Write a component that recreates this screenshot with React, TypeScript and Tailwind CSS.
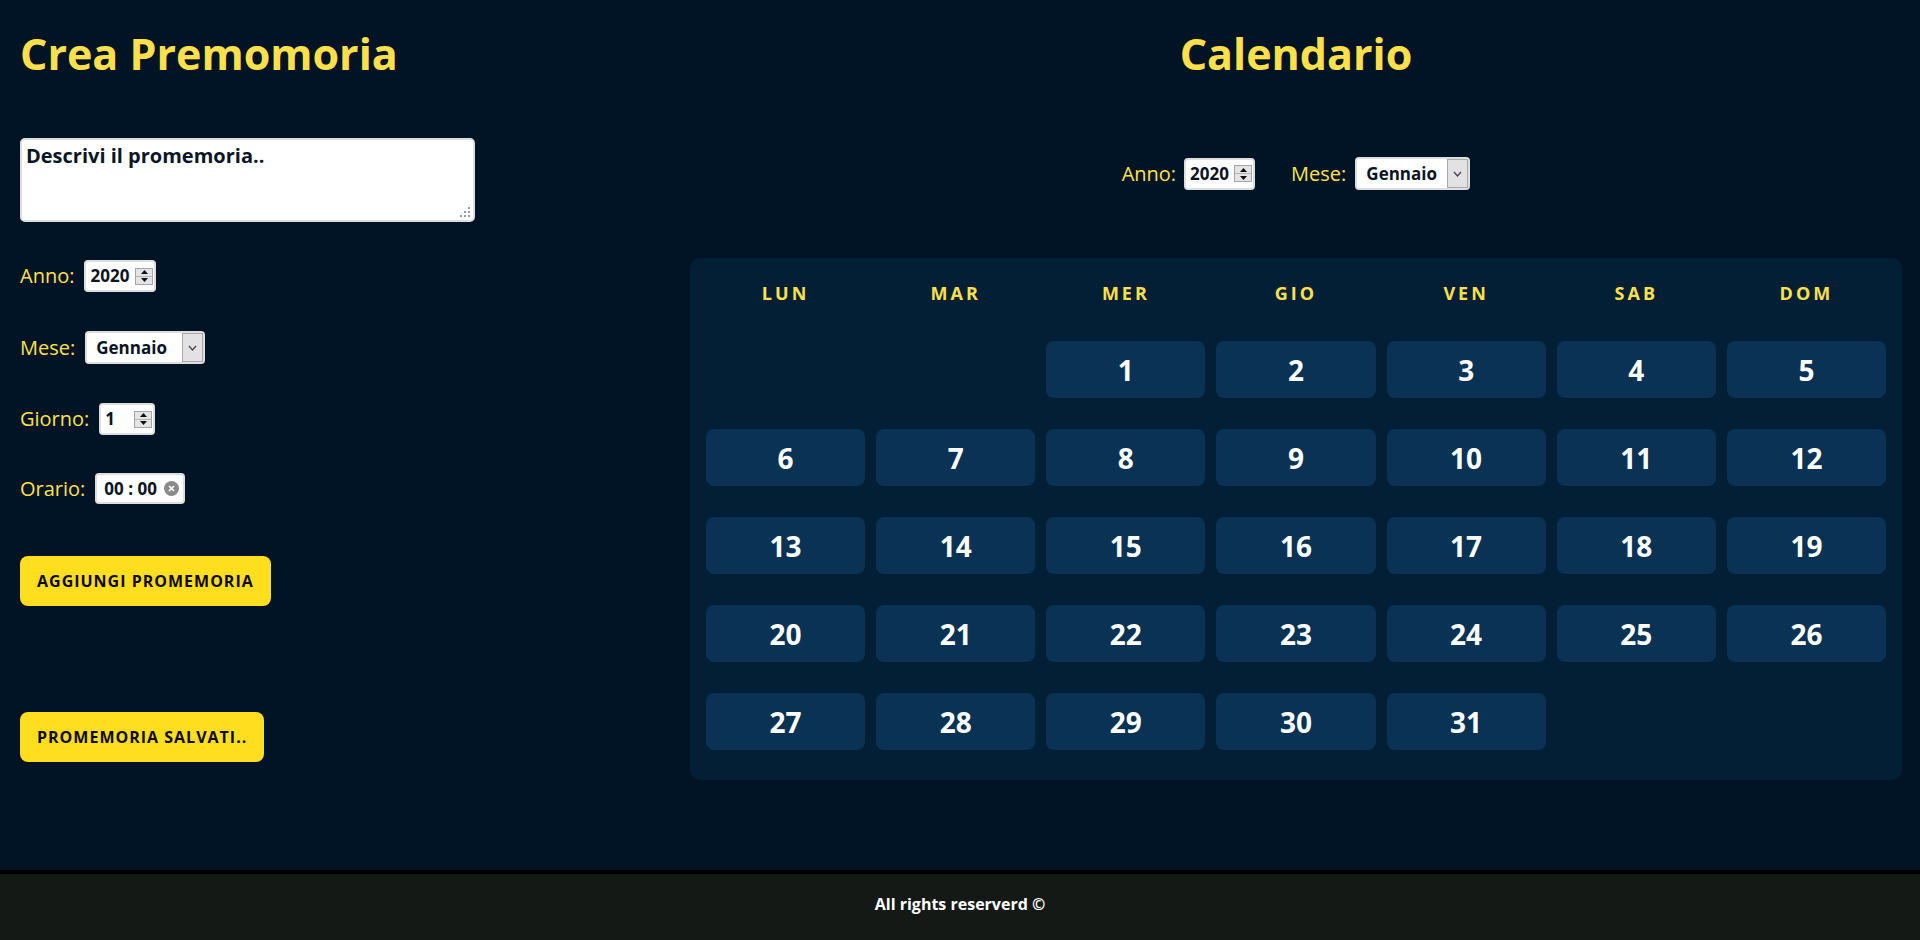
import React from "react";

const font = { fontFamily: '"Open Sans", "Liberation Sans", sans-serif' };

const DAYS = ["LUN", "MAR", "MER", "GIO", "VEN", "SAB", "DOM"];

// January 2020 starts on a Wednesday -> two empty slots before day 1
const cells: (number | null)[] = [null, null, ...Array.from({ length: 31 }, (_, i) => i + 1)];

function Spinner({ className }: { className: string }) {
  return (
    <div className={`flex flex-col border border-[#a5a5a5] bg-[#e4e4e4] ${className}`}>
      <div className="flex flex-1 items-center justify-center border-b border-[#b5b5b5]">
        <svg width="7" height="4" viewBox="0 0 7 4">
          <path d="M0 4 L3.5 0 L7 4 Z" fill="#111" />
        </svg>
      </div>
      <div className="flex flex-1 items-center justify-center">
        <svg width="7" height="4" viewBox="0 0 7 4">
          <path d="M0 0 L3.5 4 L7 0 Z" fill="#111" />
        </svg>
      </div>
    </div>
  );
}

function NumberBox({ value, width }: { value: string; width: string }) {
  return (
    <div
      className={`flex h-[32px] items-center rounded-[4px] border-2 border-[#dedede] bg-white pl-[4px] pr-[1px] ${width}`}
    >
      <span className="text-[17px] font-bold text-[#0a1424]">{value}</span>
      <Spinner className="ml-auto h-[17px] w-[18px]" />
    </div>
  );
}

function SelectBox({ value, width }: { value: string; width: string }) {
  return (
    <div
      className={`flex h-[33px] items-stretch rounded-[4px] border-2 border-[#dedede] bg-white ${width}`}
    >
      <span className="flex items-center pl-[9px] text-[17px] font-bold text-[#0a1424]">{value}</span>
      <div className="ml-auto flex w-[21px] items-center justify-center border border-[#a9a9a9] bg-[#e2e2e2]">
        <svg width="9" height="6" viewBox="0 0 9 6">
          <path d="M1 1 L4.5 5 L8 1" fill="none" stroke="#4a4052" strokeWidth="1.3" />
        </svg>
      </div>
    </div>
  );
}

function TimeBox() {
  return (
    <div className="flex h-[31px] w-[90px] items-center rounded-[4px] border-2 border-[#dedede] bg-white pl-[7px]">
      <span className="text-[17px] font-bold text-[#0a1424]">00 : 00</span>
      <div className="ml-auto mr-[4px] flex h-[15px] w-[15px] items-center justify-center rounded-full bg-[#8b8a8a]">
        <svg width="7" height="7" viewBox="0 0 7 7">
          <path d="M1 1 L6 6 M6 1 L1 6" stroke="#fff" strokeWidth="1.6" />
        </svg>
      </div>
    </div>
  );
}

function Field({ label, children }: { label: string; children: React.ReactNode }) {
  return (
    <div className="flex items-center gap-[10px]">
      <span className="text-[20px] text-[#ffe14e]">{label}</span>
      {children}
    </div>
  );
}

export default function App() {
  return (
    <div className="min-h-[940px] bg-[#011425]" style={font}>
      <main className="flex min-h-[870px] pl-[20px] pr-[18px]">
        {/* left: reminder form */}
        <section className="flex w-[670px] flex-col items-start">
          <h1 className="mt-[32px] h-[44px] text-[43px] font-bold leading-none text-[#ffe04a]">Crea Premomoria</h1>

          <div className="relative mt-[62px] h-[84px] w-[455px]">
            <textarea
              className="h-full w-full resize-none rounded-[5px] border-2 border-[#dedede] bg-white px-[4px] py-[1px] text-[20px] font-bold text-black outline-none placeholder:text-[#0a1628]"
              placeholder="Descrivi il promemoria.."
            />
            <svg className="absolute bottom-[4px] right-[4px]" width="11" height="11" viewBox="0 0 11 11">
              <rect x="8" y="0" width="2" height="2" fill="#9c9c9c" />
              <rect x="4" y="4" width="2" height="2" fill="#9c9c9c" />
              <rect x="8" y="4" width="2" height="2" fill="#9c9c9c" />
              <rect x="0" y="8" width="2" height="2" fill="#9c9c9c" />
              <rect x="4" y="8" width="2" height="2" fill="#9c9c9c" />
              <rect x="8" y="8" width="2" height="2" fill="#9c9c9c" />
            </svg>
          </div>

          <div className="mt-[38px]">
            <Field label="Anno:">
              <NumberBox value="2020" width="w-[72px]" />
            </Field>
          </div>
          <div className="mt-[39px]">
            <Field label="Mese:">
              <SelectBox value="Gennaio" width="w-[120px]" />
            </Field>
          </div>
          <div className="mt-[39px]">
            <Field label="Giorno:">
              <NumberBox value="1" width="w-[56px]" />
            </Field>
          </div>
          <div className="mt-[38px]">
            <Field label="Orario:">
              <TimeBox />
            </Field>
          </div>

          <button className="mt-[52px] h-[50px] rounded-[8px] bg-[#ffdd1f] px-[17px] text-[16px] font-bold tracking-[1px] text-[#0b0b0b]">
            AGGIUNGI PROMEMORIA
          </button>
          <button className="mt-[106px] h-[50px] rounded-[8px] bg-[#ffdd1f] px-[17px] text-[16px] font-bold tracking-[1px] text-[#0b0b0b]">
            PROMEMORIA SALVATI..
          </button>
        </section>

        {/* right: calendar */}
        <section className="flex flex-1 flex-col items-center">
          <h1 className="mt-[32px] h-[44px] text-[43px] font-bold leading-none text-[#ffe04a]">Calendario</h1>

          <div className="mt-[81px] flex items-center">
            <span className="mr-[8px] text-[20px] text-[#ffe14e]">Anno:</span>
            <NumberBox value="2020" width="w-[71px]" />
            <span className="ml-[36px] mr-[9px] text-[20px] text-[#ffe14e]">Mese:</span>
            <SelectBox value="Gennaio" width="w-[115px]" />
          </div>

          <div className="mt-[68px] w-full rounded-[10px] bg-[#021f36] px-[16px] pb-[30px] pt-[20px]">
            <div className="grid grid-cols-7 gap-x-[11px]">
              {DAYS.map((d) => (
                <div
                  key={d}
                  className="flex h-[30px] items-center justify-center text-[18px] font-bold tracking-[3px] text-[#ffe04a]"
                >
                  {d}
                </div>
              ))}
            </div>
            <div className="mt-[33px] grid grid-cols-7 gap-x-[11px] gap-y-[31px]">
              {cells.map((n, i) =>
                n === null ? (
                  <div key={i} className="h-[57px]" />
                ) : (
                  <div
                    key={i}
                    className="flex h-[57px] items-center justify-center rounded-[8px] bg-[#093254] text-[28px] font-bold text-white"
                  >
                    {n}
                  </div>
                )
              )}
            </div>
          </div>
        </section>
      </main>

      <footer className="flex h-[70px] items-center justify-center border-t-4 border-black bg-[#151915] pb-[6px]">
        <span className="text-[16px] font-bold text-white">All rights reserverd ©</span>
      </footer>
    </div>
  );
}
